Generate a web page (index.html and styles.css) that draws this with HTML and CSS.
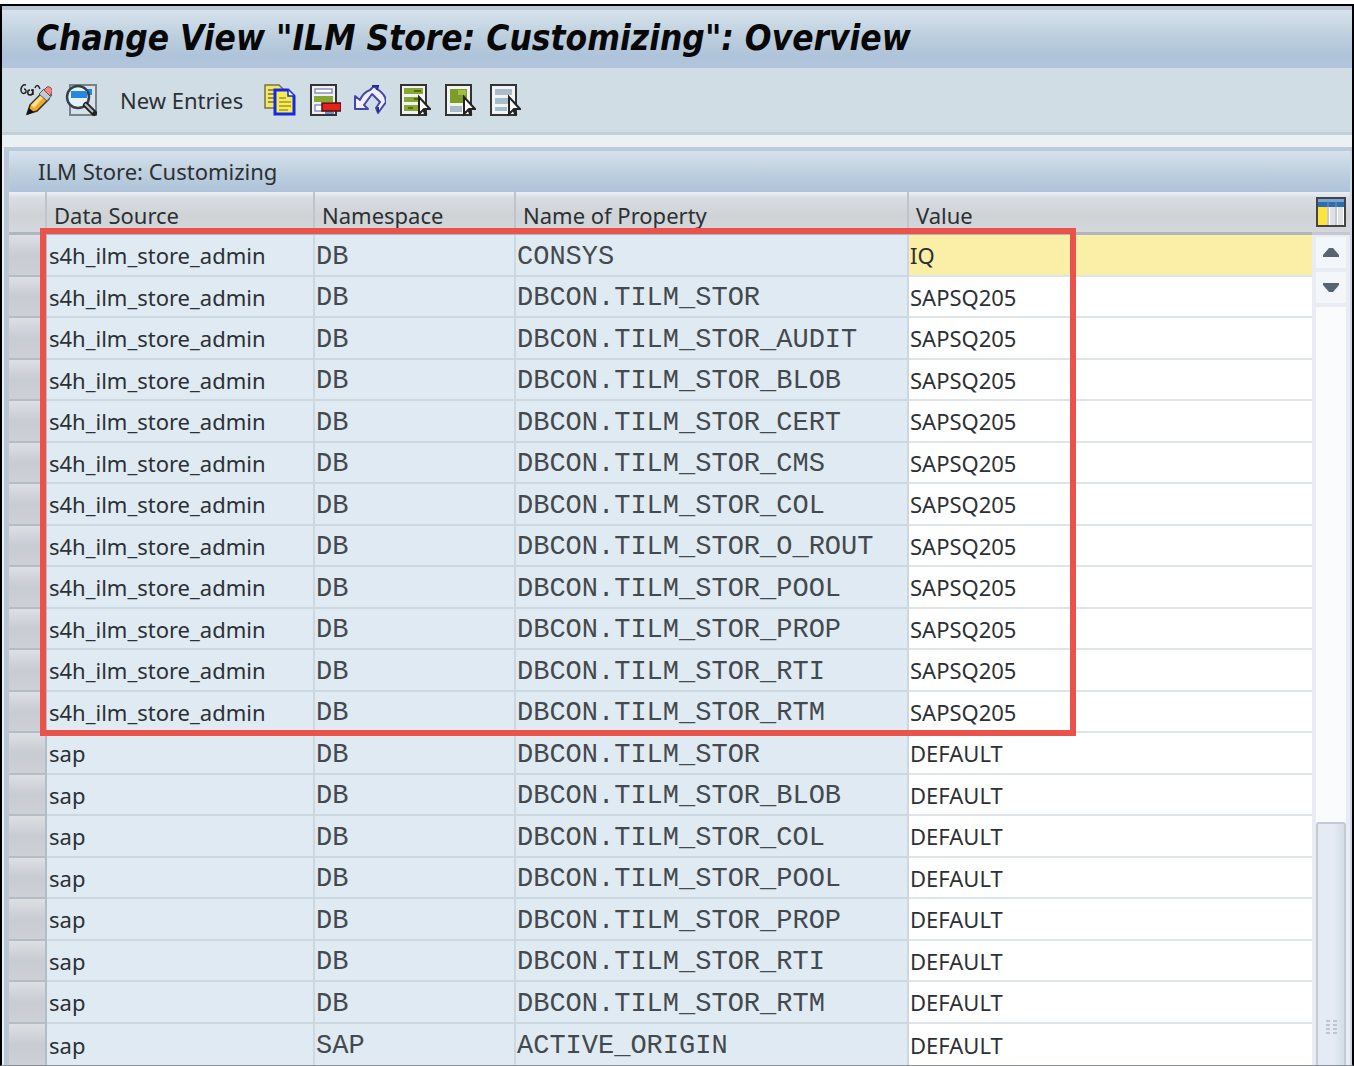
FILE: index.html
```
<!DOCTYPE html>
<html lang="en">
<head>
<meta charset="utf-8">
<title>Change View "ILM Store: Customizing": Overview</title>
<link rel="stylesheet" href="styles.css">
</head>
<body>
<main class="window">
  <h1 class="title">Change View "ILM Store: Customizing": Overview</h1>
  <div class="toolbar" role="toolbar" aria-label="Table actions">
    <button class="tool" aria-label="Display / Change">
      <svg viewBox="0 0 32 34">
        <path d="M6 2C3 1 1 4 1 7s2 4 4 3 1-4-1-4M10 7c-3 0-3 5 0 5s4-5 1-5M13 6v6M15 5c1-3 3-3 4-1l1 2" fill="none" stroke="#222" stroke-width="1.500"/>
        <path d="M7 31l3-9L22 10l7 6-12 12z" fill="#f7a823" stroke="#333" stroke-width="1.500"/>
        <path d="M11 22L22 11l3 2-11 12z" fill="#ffe08a"/>
        <path d="M19 11l5-5 8 6-5 6z" fill="#c3cad2" stroke="#555"/>
        <path d="M24 7l3-3c3-1 6 2 5 5l-2 4z" fill="#f08a8a" stroke="#844"/>
        <path d="M7 32l2-7 5 4z" fill="#111"/>
      </svg>
    </button>
    <button class="tool" aria-label="Other View">
      <svg viewBox="0 0 32 34">
        <path d="M5 2h26v30H5V2z" fill="#d9e1e7" stroke="#76828c" stroke-width="2"/>
        <path d="M14 6h13v6H14z" fill="#2687dc"/>
        <circle cx="13" cy="14" r="11" fill="#e6f1fa" stroke="#33424e" stroke-width="2.500"/>
        <path d="M6 8h16v7H6z" fill="#2687dc"/>
        <path d="M21 22l8 8" stroke="#222" stroke-width="6" stroke-linecap="round"/>
        <path d="M20 21l8 8" stroke="#b9c4cc" stroke-width="2"/>
      </svg>
    </button>
    <button class="tool-text">New Entries</button>
    <button class="tool" aria-label="Copy As">
      <svg viewBox="0 0 32 34">
        <path d="M1 2h14l4 4v19H1z" fill="#f2e66b" stroke="#77733c" stroke-width="1.500"/>
        <path d="M4 7h7M4 11h7M4 15h7M4 19h7" stroke="#77733c" stroke-width="1.500"/>
        <path d="M11 7h13l6 6v18H11z" fill="#f8ec55" stroke="#1528e8" stroke-width="3"/>
        <path d="M24 7v6h6" fill="#fffbd0" stroke="#1528e8" stroke-width="1.500"/>
        <path d="M15 15h7M15 19h12M15 23h12M15 27h9" stroke="#a39730" stroke-width="1.500"/>
      </svg>
    </button>
    <button class="tool" aria-label="Delete">
      <svg viewBox="0 0 32 34">
        <path d="M2 2h25v30H2z" fill="#eef0f4" stroke="#333" stroke-width="2"/>
        <path d="M6 6h17v4H6zM6 22h8v6H6z" fill="#fff" stroke="#8b90c4" stroke-width="1.500"/>
        <path d="M5 13h19v6H5z" fill="#86a832"/>
        <path d="M16 28h9v3h-9z" fill="#6f8fc0"/>
        <path d="M13 20h19v8H13z" fill="#e32219" stroke="#511" stroke-width="1.500"/>
      </svg>
    </button>
    <button class="tool" aria-label="Undo Change">
      <svg viewBox="0 0 32 34">
        <path d="M1 13v13h13l-4-4 8-11 8 8-4 6 2 5 8-11c0-6-4-10-9-13l-3-3-4 4C11 9 8 12 6 17z" fill="#eef0fa" stroke="#4546a8" stroke-width="2" stroke-linejoin="round"/>
        <path d="M18 3h6l-1 4M24 29v-5" fill="none" stroke="#29299a" stroke-width="2"/>
      </svg>
    </button>
    <button class="tool" aria-label="Select All">
      <svg viewBox="0 0 32 34">
        <path d="M2 2h25v30H2z" fill="#f1f3f2" stroke="#333" stroke-width="2"/>
        <path d="M5 5h19v6H5zM5 14h17v5H5zM5 22h14v6H5z" fill="#86a832"/>
        <path d="M15 8h7M15 16h4M9 25h5" stroke="#536d17" stroke-width="2"/>
        <path d="M20 14v17l5-5h6z" fill="#fff" stroke="#222" stroke-width="2"/>
        <path d="M25 27l2 5" stroke="#222" stroke-width="3"/>
      </svg>
    </button>
    <button class="tool" aria-label="Select Block">
      <svg viewBox="0 0 32 34">
        <path d="M2 2h25v30H2z" fill="#f1f3f2" stroke="#333" stroke-width="2"/>
        <path d="M6 6h17v14H6z" fill="#7d9c28"/>
        <path d="M14 7h8v5h-8z" fill="#a2bd45"/>
        <path d="M6 23h12v6H6z" fill="#a9bbc6"/>
        <path d="M20 14v17l5-5h6z" fill="#fff" stroke="#222" stroke-width="2"/>
        <path d="M25 27l2 5" stroke="#222" stroke-width="3"/>
      </svg>
    </button>
    <button class="tool" aria-label="Deselect All">
      <svg viewBox="0 0 32 34">
        <path d="M2 2h25v30H2z" fill="#f1f5f7" stroke="#333" stroke-width="2"/>
        <path d="M6 8h17M6 17h13M6 26h12" stroke="#a4bccb" stroke-width="4"/>
        <path d="M6 11h17M6 20h13" stroke="#6f8493"/>
        <path d="M20 14v17l5-5h6z" fill="#fff" stroke="#222" stroke-width="2"/>
        <path d="M25 27l2 5" stroke="#222" stroke-width="3"/>
      </svg>
    </button>
  </div>
  <section class="panel">
    <h2 class="caption">ILM Store: Customizing</h2>
    <div class="grid">
      <table class="data">
        <colgroup><col class="c-sel"><col class="c-source"><col class="c-space"><col class="c-prop"><col></colgroup>
        <thead><tr><td></td><th scope="col">Data Source</th><th scope="col">Namespace</th><th scope="col">Name of Property</th><th scope="col">Value</th></tr></thead>
        <tbody>
          <tr class="current"><td><button class="pick" aria-label="Select row 1"></button></td><td>s4h_ilm_store_admin</td><td class="mono">DB</td><td class="mono">CONSYS</td><td><input aria-label="Value 1" value="IQ"></td></tr>
          <tr><td><button class="pick" aria-label="Select row 2"></button></td><td>s4h_ilm_store_admin</td><td class="mono">DB</td><td class="mono">DBCON.TILM_STOR</td><td><input aria-label="Value 2" value="SAPSQ205"></td></tr>
          <tr><td><button class="pick" aria-label="Select row 3"></button></td><td>s4h_ilm_store_admin</td><td class="mono">DB</td><td class="mono">DBCON.TILM_STOR_AUDIT</td><td><input aria-label="Value 3" value="SAPSQ205"></td></tr>
          <tr><td><button class="pick" aria-label="Select row 4"></button></td><td>s4h_ilm_store_admin</td><td class="mono">DB</td><td class="mono">DBCON.TILM_STOR_BLOB</td><td><input aria-label="Value 4" value="SAPSQ205"></td></tr>
          <tr><td><button class="pick" aria-label="Select row 5"></button></td><td>s4h_ilm_store_admin</td><td class="mono">DB</td><td class="mono">DBCON.TILM_STOR_CERT</td><td><input aria-label="Value 5" value="SAPSQ205"></td></tr>
          <tr><td><button class="pick" aria-label="Select row 6"></button></td><td>s4h_ilm_store_admin</td><td class="mono">DB</td><td class="mono">DBCON.TILM_STOR_CMS</td><td><input aria-label="Value 6" value="SAPSQ205"></td></tr>
          <tr><td><button class="pick" aria-label="Select row 7"></button></td><td>s4h_ilm_store_admin</td><td class="mono">DB</td><td class="mono">DBCON.TILM_STOR_COL</td><td><input aria-label="Value 7" value="SAPSQ205"></td></tr>
          <tr><td><button class="pick" aria-label="Select row 8"></button></td><td>s4h_ilm_store_admin</td><td class="mono">DB</td><td class="mono">DBCON.TILM_STOR_O_ROUT</td><td><input aria-label="Value 8" value="SAPSQ205"></td></tr>
          <tr><td><button class="pick" aria-label="Select row 9"></button></td><td>s4h_ilm_store_admin</td><td class="mono">DB</td><td class="mono">DBCON.TILM_STOR_POOL</td><td><input aria-label="Value 9" value="SAPSQ205"></td></tr>
          <tr><td><button class="pick" aria-label="Select row 10"></button></td><td>s4h_ilm_store_admin</td><td class="mono">DB</td><td class="mono">DBCON.TILM_STOR_PROP</td><td><input aria-label="Value 10" value="SAPSQ205"></td></tr>
          <tr><td><button class="pick" aria-label="Select row 11"></button></td><td>s4h_ilm_store_admin</td><td class="mono">DB</td><td class="mono">DBCON.TILM_STOR_RTI</td><td><input aria-label="Value 11" value="SAPSQ205"></td></tr>
          <tr><td><button class="pick" aria-label="Select row 12"></button></td><td>s4h_ilm_store_admin</td><td class="mono">DB</td><td class="mono">DBCON.TILM_STOR_RTM</td><td><input aria-label="Value 12" value="SAPSQ205"></td></tr>
          <tr><td><button class="pick" aria-label="Select row 13"></button></td><td>sap</td><td class="mono">DB</td><td class="mono">DBCON.TILM_STOR</td><td><input aria-label="Value 13" value="DEFAULT"></td></tr>
          <tr><td><button class="pick" aria-label="Select row 14"></button></td><td>sap</td><td class="mono">DB</td><td class="mono">DBCON.TILM_STOR_BLOB</td><td><input aria-label="Value 14" value="DEFAULT"></td></tr>
          <tr><td><button class="pick" aria-label="Select row 15"></button></td><td>sap</td><td class="mono">DB</td><td class="mono">DBCON.TILM_STOR_COL</td><td><input aria-label="Value 15" value="DEFAULT"></td></tr>
          <tr><td><button class="pick" aria-label="Select row 16"></button></td><td>sap</td><td class="mono">DB</td><td class="mono">DBCON.TILM_STOR_POOL</td><td><input aria-label="Value 16" value="DEFAULT"></td></tr>
          <tr><td><button class="pick" aria-label="Select row 17"></button></td><td>sap</td><td class="mono">DB</td><td class="mono">DBCON.TILM_STOR_PROP</td><td><input aria-label="Value 17" value="DEFAULT"></td></tr>
          <tr><td><button class="pick" aria-label="Select row 18"></button></td><td>sap</td><td class="mono">DB</td><td class="mono">DBCON.TILM_STOR_RTI</td><td><input aria-label="Value 18" value="DEFAULT"></td></tr>
          <tr><td><button class="pick" aria-label="Select row 19"></button></td><td>sap</td><td class="mono">DB</td><td class="mono">DBCON.TILM_STOR_RTM</td><td><input aria-label="Value 19" value="DEFAULT"></td></tr>
          <tr><td><button class="pick" aria-label="Select row 20"></button></td><td>sap</td><td class="mono">SAP</td><td class="mono">ACTIVE_ORIGIN</td><td><input aria-label="Value 20" value="DEFAULT"></td></tr>
        </tbody>
      </table>
      <div class="side">
        <button class="config" aria-label="Table settings">
          <svg viewBox="0 0 30 30">
            <path d="M1 1h28v28H1z" fill="#fff" stroke="#444" stroke-width="2"/>
            <path d="M2 2h26v8H2z" fill="#2d6db4"/>
            <path d="M2 2h26v3H2z" fill="#79a6d8"/>
            <path d="M2 10h9v18H2z" fill="#fce43c"/>
            <path d="M14 10h5v18h-5zM22 10h5v18h-5z" fill="#dfe1e8"/>
            <path d="M12 3v25M20 3v25" stroke="#8f939c"/>
          </svg>
        </button>
        <div class="scroll">
          <button class="arrow" aria-label="Scroll up"><svg viewBox="0 0 16 9"><path d="M6 0h4l6 7v2H0V7z"/></svg></button>
          <button class="arrow" aria-label="Scroll down"><svg viewBox="0 0 16 9"><path d="M0 0h16v2l-6 7H6L0 2z"/></svg></button>
          <div class="track"><div class="thumb"><svg viewBox="0 0 11 14"><path d="M0 1h4M0 5h4M0 9h4M0 13h4M7 1h4M7 5h4M7 9h4M7 13h4" stroke="#bcc5d0" stroke-width="2"/></svg></div></div>
        </div>
      </div>
      <div class="highlight"></div>
    </div>
  </section>
</main>
</body>
</html>
```
FILE: styles.css
```
* { box-sizing: border-box; }

body {
  margin: 0;
  padding-top: 4px;
  background: #fff;
  color: #2c3034;
  font: 22px/30px "Noto Sans", sans-serif;
}

button, input {
  margin: 0;
  padding: 0;
  border: 0;
  border-radius: 0;
  background: none;
  color: inherit;
  font: inherit;
}

svg { display: block; }

.window {
  border: 2px solid #000;
  border-bottom: 1px solid #8b929b;
  background: #ebf0f4;
}

.title {
  margin: 0;
  padding: 11px 34px 12px;
  border-top: 4px solid #bcc5d3;
  border-bottom: 2px solid #d5dce7;
  background: linear-gradient(#d7e3ee, #bdcfdd 45%, #aec3da 80%, #b3c5dc);
  color: #080808;
  font: italic bold 35px/35px "DejaVu Sans Condensed", "DejaVu Sans", sans-serif;
}

.toolbar {
  display: flex;
  align-items: center;
  gap: 13px;
  height: 65px;
  padding: 0 18px 2px;
  border-bottom: 3px solid #c2d0d9;
  background: #d1dde5;
}

.tool { width: 32px; height: 34px; }
.tool-text { padding: 0 8px 0 10px; white-space: nowrap; }

.panel {
  margin-top: 12px;
  padding: 4px 2px 0 5px;
  border-left: 2px solid #ebf0f4;
  background: linear-gradient(#bccbda, #bccbda) top / 100% 4px no-repeat, linear-gradient(90deg, #b9c6d7, #cbd7e5);
}

.caption {
  margin: 0;
  padding: 5px 29px 6px;
  background: linear-gradient(#d6e2ee, #bfd0de 50%, #aec3da);
  font: inherit;
}

.grid {
  position: relative;
  display: flex;
  background: #e9edf3;
}

.data {
  flex: 1;
  border-collapse: separate;
  border-spacing: 0;
  table-layout: fixed;
  width: 0;
}

.c-sel { width: 38px; }
.c-source { width: 268px; }
.c-space { width: 201px; }
.c-prop { width: 393px; }

.data td, .data th {
  height: 41px;
  padding: 0 0 0 2px;
  border-right: 2px solid #cdd7e0;
  border-bottom: 2px solid #cdd7e0;
  background: #e0eaf3;
  font-weight: normal;
  text-align: left;
  white-space: nowrap;
}

.data thead td, .data thead th {
  height: 43px;
  padding: 6px 0 0 7px;
  border-right: 2px solid #bdc4cb;
  border-bottom: 3px solid #aeb6be;
  background: linear-gradient(#eceff3, #d9dce0 15%, #cfd3d6 60%, #d4d7dc);
}

.data tbody tr:nth-child(odd) td { height: 42px; }

.data tbody td:first-child {
  padding: 0;
  border-color: #b4bcc6;
  background: linear-gradient(#dcdfe3, #c8ccd3 50%, #cdd1d6);
}

.data tbody td:last-child {
  padding: 0;
  border-right: 0;
  border-bottom-color: #dfe4e9;
  background: #fff;
}

.data thead th:last-child { border-right: 0; }
.data tbody .current td:last-child { background: #fbeea6; }
.data tbody tr:last-child td { border-bottom: 0; }

.data .mono {
  padding: 3px 0 0 1px;
  font-family: "Liberation Mono", monospace;
  font-size: 27px;
  color: #44494e;
}

.pick { display: block; width: 100%; height: 38px; }
.data input { display: block; width: 100%; height: 38px; padding-left: 1px; outline: 0; }

.side {
  display: flex;
  flex-direction: column;
  width: 38px;
}

.config {
  height: 43px;
  padding: 4px;
  border-bottom: 3px solid #c3c8d2;
  background: linear-gradient(#eceff3, #d9dce0 15%, #cfd3d6 60%, #d4d7dc);
}

.config svg { width: 30px; height: 30px; }

.scroll {
  flex: 1;
  display: flex;
  flex-direction: column;
  gap: 4px;
  padding: 2px 4px 0;
}

.arrow {
  display: grid;
  place-items: center;
  height: 31px;
  background: #f3f6fa;
}

.arrow svg { width: 16px; height: 9px; fill: #566570; }

.track {
  flex: 1;
  display: flex;
  flex-direction: column;
  justify-content: flex-end;
  background: #fafbfc;
}

.thumb {
  display: flex;
  align-items: flex-end;
  justify-content: center;
  height: 32%;
  padding-bottom: 31px;
  border: 2px solid #c3cad4;
  border-bottom: 0;
  border-radius: 3px 3px 0 0;
  background: linear-gradient(90deg, #e5ebf4 60%, #d3dee8);
}

.thumb svg { width: 11px; height: 14px; }

/* Marks the store admin entries in the table. */
.highlight {
  position: absolute;
  top: 36px;
  left: 31px;
  width: 1036px;
  height: 508px;
  border: 6px solid #e9534c;
  pointer-events: none;
}
```
